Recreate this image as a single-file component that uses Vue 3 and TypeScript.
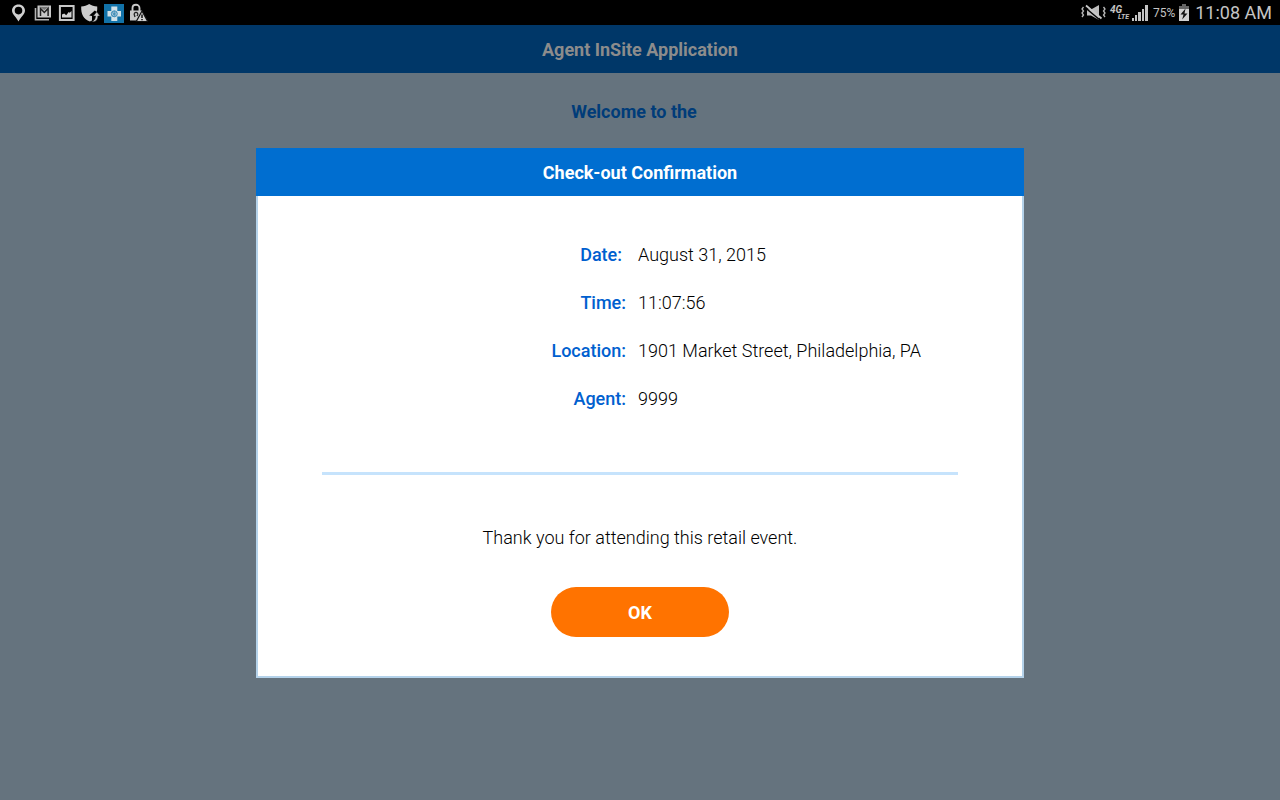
<script setup lang="ts">
import { ref } from 'vue'

interface Detail {
  label: string
  value: string
  trailing?: boolean
}

const open = ref(true)
const details: Detail[] = [
  { label: 'Date:', value: 'August 31, 2015', trailing: true },
  { label: 'Time:', value: '11:07:56' },
  { label: 'Location:', value: '1901 Market Street, Philadelphia, PA' },
  { label: 'Agent:', value: '9999' },
]
</script>

<template>
  <div class="screen">
    <div class="status-bar">
      <div class="notifications">
        <!-- location pin -->
        <svg width="20" height="20" viewBox="0 0 20 20">
          <path fill="#d0d0d0" fill-rule="evenodd" d="M10.500 1.500C6.700 1.500 4 4.200 4 7.600c0 4 4.300 6.500 6.500 11C12.700 14.100 17 11.600 17 7.600 17 4.200 14.300 1.500 10.500 1.500zm0 2.300a3.800 3.800 0 1 1 0 7.600 3.800 3.800 0 0 1 0-7.600z" />
        </svg>
        <!-- stacked mail -->
        <svg width="20" height="20" viewBox="0 0 20 20">
          <path d="M3.500 5v11.700H17" fill="none" stroke="#b4b4b4" stroke-width="1.600" />
          <path d="M5.500 2.500H19v12H5.500z" fill="#c8c8c8" />
          <path d="M8.500 13V5.500l3.800 4 3.800-4V13" fill="none" stroke="#222" stroke-width="1.500" />
          <path d="M7.500 3.800h9.600l-4.800 3.200z" fill="#777" />
        </svg>
        <!-- picture -->
        <svg width="20" height="20" viewBox="0 0 20 20">
          <path d="M3.900 2.900h13.700v14.200H3.900z" fill="none" stroke="#c8c8c8" stroke-width="2" />
          <path d="M6 14.500v-3l2.200-1 2 1.800 2.500-3.300 1 .8L15.500 8v6.500z" fill="#d0d0d0" />
        </svg>
        <!-- shield with arrow -->
        <svg width="20" height="20" viewBox="0 0 20 20">
          <path d="M9.200 1c2.500 1.800 4.800 2.300 8 2.500.2 2.500 0 4-.4 5.500l-2-1.500-5.600 5 2.800.5v4.500c-.8.500-1.300.8-2.100 1.100C3.500 16 .9 11.500 1.200 3.500c3.200-.2 5.500-.7 8-2.500z" fill="#ccc" />
          <path d="M11.500 18.800c2.500-.9 4-2.800 4-5.800h-2.300l3.600-4.200 3.200 4.200h-2.100c0 4-2.400 6.300-6.400 5.800z" fill="#ccc" stroke="#111" stroke-width=".5" />
        </svg>
        <!-- health cross -->
        <svg width="20" height="20" viewBox="0 0 20 20">
          <path d="M0 1h20v19H0z" fill="#1272a8" />
          <path d="M7.300 3.500h6V8H17v5.600h-3.700V18h-6v-4.400H3.500V8h3.800z" fill="#d1e1e8" />
          <circle cx="10.300" cy="10.800" r="3" fill="#a8c9db" stroke="#408fb9" />
          <path d="M10.300 7.800v6M8 9.500l2.300 1.300 2.300-1.300M8.300 12.800l2-2 2 2" fill="none" stroke="#2f82b0" stroke-width=".7" />
        </svg>
        <!-- lock with warning -->
        <svg width="20" height="20" viewBox="0 0 20 20">
          <path d="M4.500 8V5.200C4.500.7 11.500.7 11.500 5.200V8" fill="none" stroke="#c8c8c8" stroke-width="1.900" />
          <path d="M2 7.500h12v10H2z" fill="#c8c8c8" />
          <path d="M7 14l-.6-2a1.800 1.800 0 1 1 3.200 0L9 13" fill="none" stroke="#222" stroke-width="1.300" />
          <path d="M14 8l5.700 10.500H8.300z" fill="#d0d0d0" stroke="#111" stroke-width="1.200" />
          <path d="M14 11.500V15M14 16v1.300" stroke="#111" stroke-width="1.500" />
        </svg>
      </div>
      <div class="indicators">
        <!-- vibrate, muted -->
        <svg width="26" height="20" viewBox="0 0 26 20">
          <path d="M2.500 4L1 6l1.500 2L1 10l1.500 2L1 14M22.500 4L24 6l-1.500 2 1.500 2-1.500 2 1.500 2" fill="none" stroke="#b8b8b8" stroke-width="1.300" />
          <path d="M6 6.500h4l8-4.500v15l-8-4.500H6z" fill="#bdbdbd" />
          <path d="M4 4.500L19.500 17.500" stroke="#000" stroke-width="1.500" />
          <path d="M5 2.500L20.500 15.500" stroke="#c8c8c8" stroke-width="1.800" />
        </svg>
        <span class="network"><b class="gen">4G</b><b class="lte">LTE</b></span>
        <!-- signal strength -->
        <svg width="18" height="20" viewBox="0 0 18 20">
          <path d="M0 15h2v3H0zM3 12h2v6H3zM6 9h3v9H6zM10 6h2v12h-2zM13 2h3v16h-3z" fill="#c4c4c4" />
        </svg>
        <span class="percent">75%</span>
        <!-- charging battery -->
        <svg width="12" height="20" viewBox="0 0 12 20">
          <path d="M4 1h4v2h3v4H1V3h3z" fill="#666" />
          <path d="M1 6h10v12H1z" fill="#d0d0d0" />
          <path d="M7.500 5.500L2.500 11.500h3l-1.300 5L9.500 10.500h-3z" fill="#111" />
        </svg>
        <time class="clock">11:08 AM</time>
      </div>
    </div>

    <div class="app">
      <header class="app-header"><h1>Agent InSite Application</h1></header>
      <p class="welcome">Welcome to the</p>

      <div v-if="open" class="overlay">
        <section class="dialog" role="dialog" aria-modal="true" aria-labelledby="dialog-title">
          <h2 id="dialog-title">Check-out Confirmation</h2>
          <div class="dialog-body">
            <dl class="details">
              <template v-for="item in details" :key="item.label">
                <dt :class="{ trailing: item.trailing }">{{ item.label }}</dt>
                <dd>{{ item.value }}</dd>
              </template>
            </dl>
            <hr />
            <p class="thanks">Thank you for attending this retail event.</p>
            <button type="button" class="ok" @click="open = false">OK</button>
          </div>
        </section>
      </div>
    </div>
  </div>
</template>

<style>
body {
  margin: 0;
}
</style>

<style scoped>
.screen {
  display: flex;
  flex-direction: column;
  min-height: 100vh;
  background: #65737e;
  font-family: Roboto, "Liberation Sans", sans-serif;
  font-size: 18px;
  line-height: 24px;
  color: #000;
}

.status-bar {
  display: flex;
  justify-content: space-between;
  height: 25px;
  padding: 0 8px;
  background: #000;
  color: #c4c4c4;
}

.notifications,
.indicators {
  display: flex;
  align-items: center;
  gap: 4px;
}

.indicators {
  gap: 3px;
}

.network {
  display: flex;
  flex-direction: column;
  width: 19px;
  font-style: italic;
}

.gen {
  font-size: 10px;
  line-height: 9px;
}

.lte {
  align-self: flex-end;
  font-size: 7px;
  line-height: 7px;
}

.percent {
  font-size: 12px;
}

.clock {
  margin-left: 2px;
  font-size: 18px;
}

.app {
  position: relative;
  flex: 1;
}

.app-header {
  padding: 13px 12px 11px;
  background: #003768;
  text-align: center;
}

h1,
h2 {
  margin: 0;
  font-size: 18px;
  font-weight: 700;
}

h1 {
  color: #8c8c8c;
}

.welcome {
  margin: 27px 0 0;
  padding-right: 12px;
  text-align: center;
  font-weight: 700;
  color: #003c79;
}

.overlay {
  position: absolute;
  inset: 0;
  display: flex;
  align-items: center;
  justify-content: center;
}

.dialog {
  width: 60%;
  background: #fff;
}

h2 {
  padding: 13px 12px 11px;
  background: #006ed0;
  color: #fff;
  text-align: center;
}

.dialog-body {
  display: flex;
  flex-direction: column;
  align-items: center;
  padding: 47px 64px 39px;
  border: 2px solid #b4d2ea;
  border-top: 0;
}

.details {
  display: grid;
  grid-template-columns: 1fr 1fr;
  row-gap: 24px;
  align-self: stretch;
  margin: 0;
}

dt {
  padding-right: 14px;
  text-align: right;
  font-weight: 500;
  color: #0060cf;
}

dt.trailing {
  padding-right: 18px;
}

dd {
  margin: 0 0 0 -2px;
  font-weight: 300;
}

hr {
  align-self: stretch;
  height: 3px;
  margin: 61px 0 51px;
  border: 0;
  background: #c6e3fc;
}

.thanks {
  margin: 0 0 37px;
  font-weight: 300;
}

.ok {
  width: 178px;
  height: 50px;
  padding: 2px 0 0;
  border: 0;
  border-radius: 25px;
  background: #ff7300;
  color: #fff;
  font: inherit;
  font-weight: 700;
  cursor: pointer;
}
</style>
